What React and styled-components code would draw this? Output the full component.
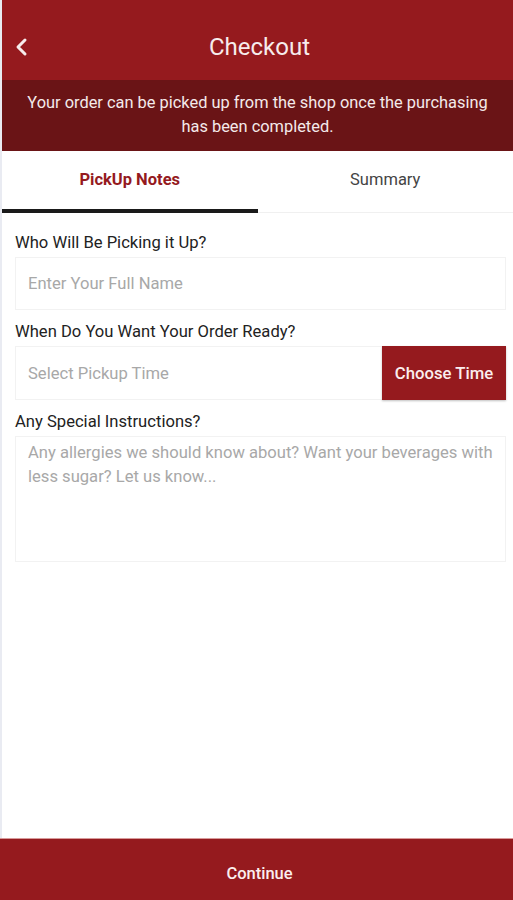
import React from 'react';
import styled, { createGlobalStyle } from 'styled-components';

const GlobalStyle = createGlobalStyle`
  html, body {
    margin: 0;
    padding: 0;
    background: #ffffff;
    font-family: Roboto, "Noto Sans", sans-serif;
  }
`;

const Screen = styled.div`
  width: 513px;
  height: 900px;
  display: flex;
  flex-direction: column;
  border-left: 2px solid #e9ebf2;
  box-sizing: border-box;
  background: #fff;
`;

const Header = styled.header`
  height: 80px;
  background: #951a1e;
  display: flex;
  align-items: center;
  justify-content: center;
  position: relative;
  padding-top: 14px;
  box-sizing: border-box;
`;

const BackButton = styled.button`
  position: absolute;
  left: 11px;
  top: 36px;
  background: none;
  border: none;
  padding: 0;
  display: flex;
`;

const Title = styled.h1`
  margin: 0 0 0 4px;
  color: #f7ecec;
  font-size: 24px;
  font-weight: 400;
`;

const Banner = styled.div`
  background: #6a1416;
  color: #f4eaea;
  font-size: 16.4px;
  line-height: 24px;
  text-align: center;
  padding: 11px 22px 12px;
`;

const Tabs = styled.div`
  display: flex;
  height: 62px;
`;

const Tab = styled.div`
  flex: 1;
  display: flex;
  align-items: center;
  justify-content: center;
  font-size: 16.5px;
  font-weight: ${p => (p.active ? 700 : 400)};
  color: ${p => (p.active ? '#951a1e' : '#444')};
  border-bottom: ${p => (p.active ? '4px solid #1a1a1a' : '1px solid #f0f0f0')};
  padding-bottom: ${p => (p.active ? '2px' : '5px')};
  box-sizing: border-box;
`;

const Form = styled.div`
  padding: 8px 7px 0 13px;
  display: flex;
  flex-direction: column;
`;

const Label = styled.div`
  font-size: 16.6px;
  line-height: 20px;
  color: #222;
  margin: 12px 0 4px;
`;

const Field = styled.div`
  height: 53px;
  border: 1px solid #f2f2f2;
  display: flex;
  align-items: center;
  padding-left: 12px;
  font-size: 16.6px;
  color: #a8a8a8;
  box-sizing: border-box;
`;

const TimeRow = styled.div`
  display: flex;
  height: 54px;
  border: 1px solid #f2f2f2;
  border-right: none;
  box-sizing: border-box;
`;

const TimeField = styled.div`
  flex: 1;
  display: flex;
  align-items: center;
  padding-left: 12px;
  font-size: 16.6px;
  color: #a8a8a8;
`;

const ChooseButton = styled.button`
  width: 124px;
  margin: -1px 0;
  background: #951a1e;
  color: #fbeeee;
  border: none;
  font-family: inherit;
  font-size: 16.7px;
  font-weight: 500;
  box-shadow: 0 1px 2px rgba(0,0,0,0.25);
`;

const TextArea = styled.div`
  height: 126px;
  border: 1px solid #f2f2f2;
  padding: 4px 12px;
  font-size: 16.6px;
  line-height: 24px;
  color: #a8a8a8;
  box-sizing: border-box;
`;

const Spacer = styled.div`
  flex: 1;
`;

const Footer = styled.button`
  height: 62px;
  background: #951a1e;
  color: #fbeeee;
  border: none;
  border-top: 1px solid #d89a9a;
  font-family: inherit;
  font-size: 16.5px;
  font-weight: 500;
  padding: 8px 0 0 6px;
  margin-left: -2px;
  width: 513px;
`;

export default function App() {
  return (
    <Screen>
      <GlobalStyle />
      <Header>
        <BackButton>
          <svg width="18" height="22" viewBox="0 0 18 22">
            <path d="M12 4 L5 11 L12 18" fill="none" stroke="#f7ecec" strokeWidth="3" strokeLinecap="round" strokeLinejoin="round" />
          </svg>
        </BackButton>
        <Title>Checkout</Title>
      </Header>
      <Banner>Your order can be picked up from the shop once the purchasing has been completed.</Banner>
      <Tabs>
        <Tab active>PickUp Notes</Tab>
        <Tab>Summary</Tab>
      </Tabs>
      <Form>
        <Label>Who Will Be Picking it Up?</Label>
        <Field>Enter Your Full Name</Field>
        <Label>When Do You Want Your Order Ready?</Label>
        <TimeRow>
          <TimeField>Select Pickup Time</TimeField>
          <ChooseButton>Choose Time</ChooseButton>
        </TimeRow>
        <Label>Any Special Instructions?</Label>
        <TextArea>Any allergies we should know about? Want your beverages with less sugar? Let us know...</TextArea>
      </Form>
      <Spacer />
      <Footer>Continue</Footer>
    </Screen>
  );
}
